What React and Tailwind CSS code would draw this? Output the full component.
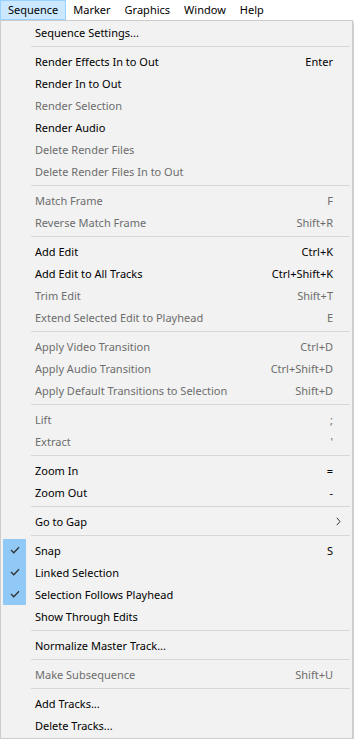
import React from 'react';

const menus = ['Sequence', 'Marker', 'Graphics', 'Window', 'Help'];

// each group is separated by a rule
const groups = [
  [{ label: 'Sequence Settings...' }],
  [
    { label: 'Render Effects In to Out', key: 'Enter' },
    { label: 'Render In to Out' },
    { label: 'Render Selection', off: true },
    { label: 'Render Audio' },
    { label: 'Delete Render Files', off: true },
    { label: 'Delete Render Files In to Out', off: true },
  ],
  [
    { label: 'Match Frame', key: 'F', off: true },
    { label: 'Reverse Match Frame', key: 'Shift+R', off: true },
  ],
  [
    { label: 'Add Edit', key: 'Ctrl+K' },
    { label: 'Add Edit to All Tracks', key: 'Ctrl+Shift+K' },
    { label: 'Trim Edit', key: 'Shift+T', off: true },
    { label: 'Extend Selected Edit to Playhead', key: 'E', off: true },
  ],
  [
    { label: 'Apply Video Transition', key: 'Ctrl+D', off: true },
    { label: 'Apply Audio Transition', key: 'Ctrl+Shift+D', off: true },
    { label: 'Apply Default Transitions to Selection', key: 'Shift+D', off: true },
  ],
  [
    { label: 'Lift', key: ';', off: true },
    { label: 'Extract', key: "'", off: true },
  ],
  [
    { label: 'Zoom In', key: '=' },
    { label: 'Zoom Out', key: '-' },
  ],
  [{ label: 'Go to Gap', sub: true }],
  [
    { label: 'Snap', key: 'S', checked: true },
    { label: 'Linked Selection', checked: true },
    { label: 'Selection Follows Playhead', checked: true },
    { label: 'Show Through Edits' },
  ],
  [{ label: 'Normalize Master Track...' }],
  [{ label: 'Make Subsequence', key: 'Shift+U', off: true }],
  [
    { label: 'Add Tracks...' },
    { label: 'Delete Tracks...' },
  ],
];

function Check() {
  return (
    <svg width="10" height="8" viewBox="0 0 10 8">
      <path d="M1 4 L3.8 6.8 L9 1.2" fill="none" stroke="#333" strokeWidth="1.3" />
    </svg>
  );
}

function Item({ item }) {
  return (
    <div className={`flex h-[22px] items-center ${item.off ? 'text-[#6d6d6d]' : 'text-[#000]'}`}>
      <div className={`ml-[2px] flex h-full w-[23px] items-center justify-center ${item.checked ? 'bg-[#90c8f6]' : ''}`}>
        {item.checked && <Check />}
      </div>
      <span className="ml-[9px] flex-1 whitespace-nowrap">{item.label}</span>
      {item.key && <span className="mr-[19px] whitespace-nowrap">{item.key}</span>}
      {item.sub && (
        <svg className="mr-[11px]" width="5" height="9" viewBox="0 0 5 9">
          <path d="M0.8 0.8 L4 4.5 L0.8 8.2" fill="none" stroke="#333" strokeWidth="1" />
        </svg>
      )}
    </div>
  );
}

export default function App() {
  return (
    <div className="h-[739px] w-[354px] overflow-hidden bg-white text-[11px] leading-none" style={{ fontFamily: '"Segoe UI", "Noto Sans", sans-serif' }}>
      {/* menu bar */}
      <div className="flex h-[20px] items-center bg-white">
        {menus.map((m, i) => (
          <div
            key={m}
            className={`flex h-[20px] items-center pb-[1px] ${i === 0 ? 'border border-[#99d1ff] bg-[#cce8ff] px-[7px]' : 'border border-transparent px-[6px]'}`}
          >
            {m}
          </div>
        ))}
      </div>

      {/* dropdown */}
      <div className="w-[353px] border border-[#cccccc] bg-[#f2f2f2] pb-[2px] shadow-[2px_2px_2px_rgba(0,0,0,0.2)]">
        {groups.map((g, gi) => (
          <div key={gi}>
            {gi > 0 && (
              <div className="flex h-[7px] items-center pl-[30px] pr-[2px]">
                <div className="h-px w-full bg-[#d7d7d7]" />
              </div>
            )}
            {g.map((item) => (
              <Item key={item.label} item={item} />
            ))}
          </div>
        ))}
      </div>
    </div>
  );
}
